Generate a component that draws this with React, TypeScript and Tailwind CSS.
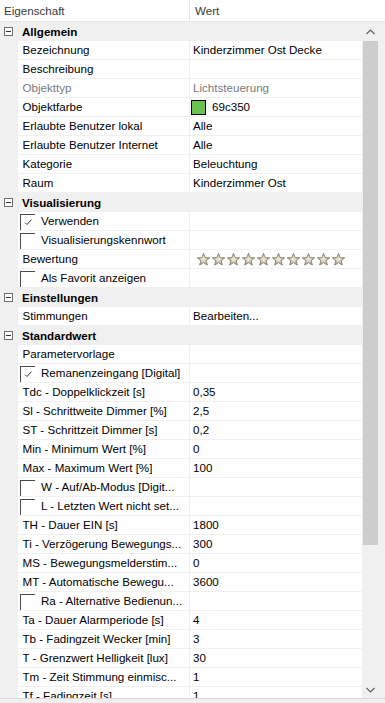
import React from "react";

type Row =
  | { kind: "cat"; label: string }
  | { kind: "prop"; label: string; value?: string; disabled?: boolean; check?: boolean; checked?: boolean; swatch?: string; stars?: boolean };

const rows: Row[] = [
  { kind: "cat", label: "Allgemein" },
  { kind: "prop", label: "Bezeichnung", value: "Kinderzimmer Ost Decke" },
  { kind: "prop", label: "Beschreibung", value: "" },
  { kind: "prop", label: "Objekttyp", value: "Lichtsteuerung", disabled: true },
  { kind: "prop", label: "Objektfarbe", value: "69c350", swatch: "#69c350" },
  { kind: "prop", label: "Erlaubte Benutzer lokal", value: "Alle" },
  { kind: "prop", label: "Erlaubte Benutzer Internet", value: "Alle" },
  { kind: "prop", label: "Kategorie", value: "Beleuchtung" },
  { kind: "prop", label: "Raum", value: "Kinderzimmer Ost" },
  { kind: "cat", label: "Visualisierung" },
  { kind: "prop", label: "Verwenden", check: true, checked: true },
  { kind: "prop", label: "Visualisierungskennwort", check: true },
  { kind: "prop", label: "Bewertung", stars: true },
  { kind: "prop", label: "Als Favorit anzeigen", check: true },
  { kind: "cat", label: "Einstellungen" },
  { kind: "prop", label: "Stimmungen", value: "Bearbeiten..." },
  { kind: "cat", label: "Standardwert" },
  { kind: "prop", label: "Parametervorlage", value: "" },
  { kind: "prop", label: "Remanenzeingang [Digital]", check: true, checked: true },
  { kind: "prop", label: "Tdc - Doppelklickzeit [s]", value: "0,35" },
  { kind: "prop", label: "Sl - Schrittweite Dimmer [%]", value: "2,5" },
  { kind: "prop", label: "ST - Schrittzeit Dimmer [s]", value: "0,2" },
  { kind: "prop", label: "Min - Minimum Wert [%]", value: "0" },
  { kind: "prop", label: "Max - Maximum Wert [%]", value: "100" },
  { kind: "prop", label: "W - Auf/Ab-Modus [Digit...", check: true },
  { kind: "prop", label: "L - Letzten Wert nicht set...", check: true },
  { kind: "prop", label: "TH - Dauer EIN [s]", value: "1800" },
  { kind: "prop", label: "Ti - Verzögerung Bewegungs...", value: "300" },
  { kind: "prop", label: "MS - Bewegungsmelderstim...", value: "0" },
  { kind: "prop", label: "MT - Automatische Bewegu...", value: "3600" },
  { kind: "prop", label: "Ra - Alternative Bedienun...", check: true },
  { kind: "prop", label: "Ta - Dauer Alarmperiode [s]", value: "4" },
  { kind: "prop", label: "Tb - Fadingzeit Wecker [min]", value: "3" },
  { kind: "prop", label: "T - Grenzwert Helligkeit [lux]", value: "30" },
  { kind: "prop", label: "Tm - Zeit Stimmung einmisc...", value: "1" },
  { kind: "prop", label: "Tf - Fadingzeit [s]", value: "1" },
];

function Star({ i }: { i: number }) {
  const id = `sg${i}`;
  return (
    <svg width="13" height="13" viewBox="0 0 12 12" className="shrink-0">
      <defs>
        <radialGradient id={id} cx="50%" cy="50%" r="60%">
          <stop offset="0%" stopColor="#f2efe6" />
          <stop offset="55%" stopColor="#c4bea9" />
          <stop offset="100%" stopColor="#8a826b" />
        </radialGradient>
      </defs>
      <polygon
        points="6,0.3 7.53,4.2 11.71,4.45 8.47,7.1 9.53,11.15 6,8.9 2.47,11.15 3.53,7.1 0.29,4.45 4.47,4.2"
        fill={`url(#${id})`}
        stroke="#857d66"
        strokeWidth="0.8"
        strokeLinejoin="round"
      />
    </svg>
  );
}

function CheckBox({ checked }: { checked?: boolean }) {
  return (
    <div className="absolute left-[2px] top-[2px] w-[15px] h-[16px] border-t border-l border-[#4a4a4a]">
      {checked && (
        <svg width="14" height="14" viewBox="0 0 14 14" className="absolute left-0 top-0">
          <polyline points="4,7.5 6,9.5 10.5,4.5" fill="none" stroke="#333" strokeWidth="1" />
        </svg>
      )}
    </div>
  );
}

function CatRow({ label }: { label: string }) {
  return (
    <div className="flex h-[19px] items-center bg-[#f0f0f0] shrink-0">
      <div className="w-[18px] h-full flex items-center pl-[4px]">
        <div className="w-[9px] h-[9px] border border-[#6e6e6e] bg-white flex items-center justify-center">
          <div className="w-[5px] h-px bg-[#333]" />
        </div>
      </div>
      <div className="pl-[4px] font-bold text-black">{label}</div>
    </div>
  );
}

function PropRow({ r }: { r: Extract<Row, { kind: "prop" }> }) {
  return (
    <div className="flex h-[19px] shrink-0">
      <div className="w-[18px] h-full bg-[#f0f0f0]" />
      <div className="relative w-[172px] h-full border-b border-r border-[#f0f0f0] bg-white flex items-center overflow-hidden whitespace-nowrap">
        {r.check ? (
          <>
            <CheckBox checked={r.checked} />
            <span className="pl-[23px] text-black">{r.label}</span>
          </>
        ) : (
          <span className={`pl-[4.5px] ${r.disabled ? "text-[#7a7a7a]" : "text-black"}`}>{r.label}</span>
        )}
      </div>
      <div className="flex-1 h-full border-b border-[#f0f0f0] bg-white flex items-center overflow-hidden whitespace-nowrap">
        {r.swatch && (
          <div className="ml-[1px] w-[15px] h-[15px] border border-black shrink-0" style={{ backgroundColor: r.swatch }} />
        )}
        {r.stars ? (
          <div className="flex gap-[2px] pl-[7px]">
            {Array.from({ length: 10 }).map((_, i) => (
              <Star key={i} i={i} />
            ))}
          </div>
        ) : (
          <span className={`${r.swatch ? "pl-[6px]" : "pl-[3px]"} ${r.disabled ? "text-[#7a7a7a]" : "text-black"}`}>
            {r.value}
          </span>
        )}
      </div>
    </div>
  );
}

export default function App() {
  return (
    <div className="w-[385px] h-[703px] bg-[#f0f0f0] flex flex-col overflow-hidden font-['Liberation_Sans',Arial,sans-serif] text-[11.6px] leading-none">
      <div className="h-[22px] shrink-0 flex bg-white border-b border-[#e5e5e5] text-[#3a3a3a]">
        <div className="w-[190px] h-full border-r border-[#e5e5e5] flex items-center pl-[4px]">Eigenschaft</div>
        <div className="flex-1 h-full flex items-center pl-[5px]">Wert</div>
      </div>
      <div className="flex h-[676px] shrink-0">
        <div className="w-[362px] h-full overflow-hidden bg-white flex flex-col">
          {rows.map((r, i) => (r.kind === "cat" ? <CatRow key={i} label={r.label} /> : <PropRow key={i} r={r} />))}
        </div>
        <div className="w-[17px] h-full bg-[#f0f0f0] flex flex-col">
          <div className="h-[19px] flex items-center justify-center shrink-0">
            <svg width="9" height="6" viewBox="0 0 9 6">
              <polyline points="0.5,5 4.5,1 8.5,5" fill="none" stroke="#606060" strokeWidth="1.2" />
            </svg>
          </div>
          <div className="h-[504px] mx-[1px] bg-[#cdcdcd] shrink-0" />
          <div className="flex-1" />
          <div className="h-[17px] flex items-center justify-center shrink-0">
            <svg width="9" height="6" viewBox="0 0 9 6">
              <polyline points="0.5,1 4.5,5 8.5,1" fill="none" stroke="#606060" strokeWidth="1.2" />
            </svg>
          </div>
        </div>
        <div className="w-[6px] h-full bg-[#f0f0f0]" />
      </div>
      <div className="h-[5px] shrink-0 border-t border-[#d9d9d9] bg-[#f0f0f0]" />
    </div>
  );
}
